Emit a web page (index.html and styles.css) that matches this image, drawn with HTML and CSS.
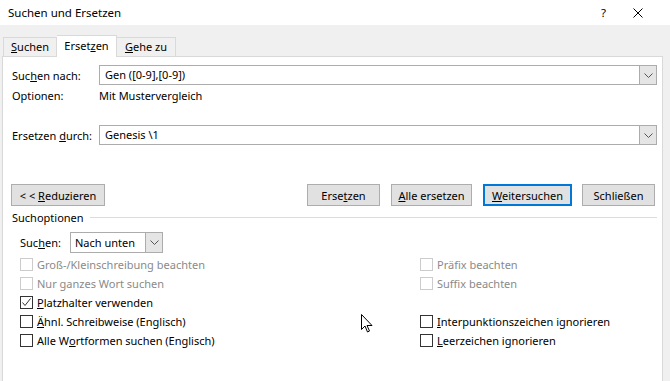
FILE: index.html
```html
<!DOCTYPE html>
<html lang="de">
<head>
    <meta charset="UTF-8">
    <title>Suchen und Ersetzen</title>
    <link rel="stylesheet" href="styles.css">
</head>
<body>
    <div class="dialog">
        <div class="titlebar">
            <span class="title">Suchen und Ersetzen</span>
            <span class="help">?</span>
            <svg class="close" width="10" height="10" viewBox="0 0 10 10"><path d="M0.5 0.5 L9.5 9.5 M9.5 0.5 L0.5 9.5" stroke="#000" stroke-width="1"/></svg>
        </div>

        <div class="tabs">
            <div class="tab tab-find"><u>S</u>uchen</div>
            <div class="tab tab-replace active">Erset<u>z</u>en</div>
            <div class="tab tab-goto"><u>G</u>ehe zu</div>
        </div>

        <div class="panel">
            <div class="field-row">
                <label class="field-label">Suc<u>h</u>en nach:</label>
                <div class="combo">
                    <span class="combo-text">Gen ([0-9],[0-9])</span>
                    <span class="combo-btn"><svg width="9" height="5" viewBox="0 0 9 5"><polyline points="0.5,0.5 4.5,4.5 8.5,0.5" fill="none" stroke="#555"/></svg></span>
                </div>
            </div>
            <div class="options-row">
                <span class="field-label">Optionen:</span>
                <span>Mit Mustervergleich</span>
            </div>
            <div class="field-row replace-row">
                <label class="field-label">Ersetzen <u>d</u>urch:</label>
                <div class="combo">
                    <span class="combo-text">Genesis \1</span>
                    <span class="combo-btn"><svg width="9" height="5" viewBox="0 0 9 5"><polyline points="0.5,0.5 4.5,4.5 8.5,0.5" fill="none" stroke="#555"/></svg></span>
                </div>
            </div>

            <div class="button-row">
                <button class="btn btn-reduce">&lt; &lt; <u>R</u>eduzieren</button>
                <div class="btn-group">
                    <button class="btn btn-replace">Erse<u>t</u>zen</button>
                    <button class="btn btn-all"><u>A</u>lle ersetzen</button>
                    <button class="btn btn-next default"><u>W</u>eitersuchen</button>
                    <button class="btn btn-close">Schließen</button>
                </div>
            </div>

            <div class="group-title">
                <span>Suchoptionen</span>
                <div class="group-line"></div>
            </div>

            <div class="direction-row">
                <label>Suc<u>h</u>en:</label>
                <div class="combo small">
                    <span class="combo-text">Nach unten</span>
                    <span class="combo-btn"><svg width="9" height="5" viewBox="0 0 9 5"><polyline points="0.5,0.5 4.5,4.5 8.5,0.5" fill="none" stroke="#555"/></svg></span>
                </div>
            </div>

            <div class="checks">
                <div class="check-col">
                    <div class="check disabled"><span class="box"></span>Groß-/Kleinschreibung beachten</div>
                    <div class="check disabled"><span class="box"></span>Nur ganzes Wort suchen</div>
                    <div class="check"><span class="box"><svg width="11" height="11" viewBox="0 0 11 11"><polyline points="1.5,5.5 4,8.5 9.5,1.5" fill="none" stroke="#333" stroke-width="1"/></svg></span><u>P</u>latzhalter verwenden</div>
                    <div class="check"><span class="box"></span><u>Ä</u>hnl. Schreibweise (Englisch)</div>
                    <div class="check"><span class="box"></span>Alle W<u>o</u>rtformen suchen (Englisch)</div>
                </div>
                <div class="check-col right">
                    <div class="check disabled"><span class="box"></span>Präfix beachten</div>
                    <div class="check disabled"><span class="box"></span>Suffix beachten</div>
                    <div class="check spacer"></div>
                    <div class="check"><span class="box"></span><u>I</u>nterpunktionszeichen ignorieren</div>
                    <div class="check"><span class="box"></span><u>L</u>eerzeichen ignorieren</div>
                </div>
            </div>
        </div>

        <svg class="cursor" width="12" height="19" viewBox="0 0 12 19"><path d="M0.5 0.5 L0.5 15.5 L4 12 L6.5 18 L8.5 17 L6 11.5 L11 11.5 Z" fill="#fff" stroke="#000" stroke-width="1"/></svg>
    </div>
</body>
</html>
```

FILE: styles.css
```css
* { box-sizing: border-box; }
html, body { margin: 0; padding: 0; }
body { width: 670px; height: 381px; overflow: hidden; background: #f0f0f0; font-family: "Segoe UI", "Noto Sans", Arial, sans-serif; font-size: 11px; color: #000; }
u { text-decoration: underline; text-underline-offset: 1px; }

.dialog { position: relative; height: 381px; }

.titlebar { height: 25px; background: #fff; display: flex; align-items: center; padding-left: 8px; font-size: 11.5px; }
.title { flex: 1; }
.help { width: 12px; margin-right: 20px; }
.close { margin-right: 27px; }

.tabs { display: flex; align-items: flex-end; height: 31px; padding-left: 3px; }
.tab { height: 19px; line-height: 18px; text-align: center; border: 1px solid #d9d9d9; border-bottom: none; background: #f0f0f0; }
.tab-find { width: 54px; }
.tab-replace { width: 60px; }
.tab-goto { width: 59px; border-left: none; }
.tab.active { height: 22px; line-height: 20px; background: #fff; border-left: none; margin-bottom: -1px; position: relative; z-index: 1; }

.panel { margin-left: 2px; width: 661px; height: 340px; background: #fff; border: 1px solid #d9d9d9; padding: 8px 0 0 9px; }

.field-row { display: flex; align-items: center; height: 20px; }
.field-label { width: 87px; }
.replace-row { margin-top: 20px; }
.combo { width: 558px; height: 20px; border: 1px solid #acacac; display: flex; align-items: stretch; background: #fff; }
.combo-text { flex: 1; padding-left: 5px; line-height: 18px; }
.combo-btn { width: 17px; background: #e5e5e5; border-left: 1px solid #acacac; display: flex; align-items: center; justify-content: center; }

.options-row { display: flex; height: 20px; align-items: center; }

.button-row { display: flex; justify-content: space-between; margin-top: 39px; width: 643px; }
.btn { height: 22px; font-family: inherit; font-size: 11px; color: #000; background: #e1e1e1; border: 1px solid #adadad; padding: 0; margin: 0; }
.btn-group { display: flex; gap: 11px; }
.btn-reduce { width: 94px; margin-left: -1px; }
.btn-replace { width: 73px; }
.btn-all { width: 81px; }
.btn-next { width: 89px; }
.btn-close { width: 73px; margin-left: -1px; }
.btn.default { border: 2px solid #0078d7; }

.group-title { display: flex; align-items: center; height: 20px; width: 645px; margin-top: 1px; }
.group-line { flex: 1; height: 1px; background: #dcdcdc; margin-left: 6px; }

.direction-row { display: flex; align-items: center; margin-top: 5px; padding-left: 8px; height: 21px; }
.direction-row label { width: 50px; }
.combo.small { width: 93px; height: 21px; }
.combo.small .combo-text { padding-left: 4px; line-height: 19px; }

.checks { display: flex; margin-top: 2px; padding-left: 8px; }
.check-col { width: 400px; }
.check-col.right { width: 240px; }
.check { display: flex; align-items: center; height: 19px; white-space: nowrap; }
.box { width: 13px; height: 13px; border: 1px solid #333; margin-right: 4px; display: flex; align-items: center; justify-content: center; flex: none; }
.check.disabled { color: #8a8a8a; }
.check.disabled .box { border-color: #cccccc; }

.cursor { position: absolute; left: 361px; top: 314px; }
```
